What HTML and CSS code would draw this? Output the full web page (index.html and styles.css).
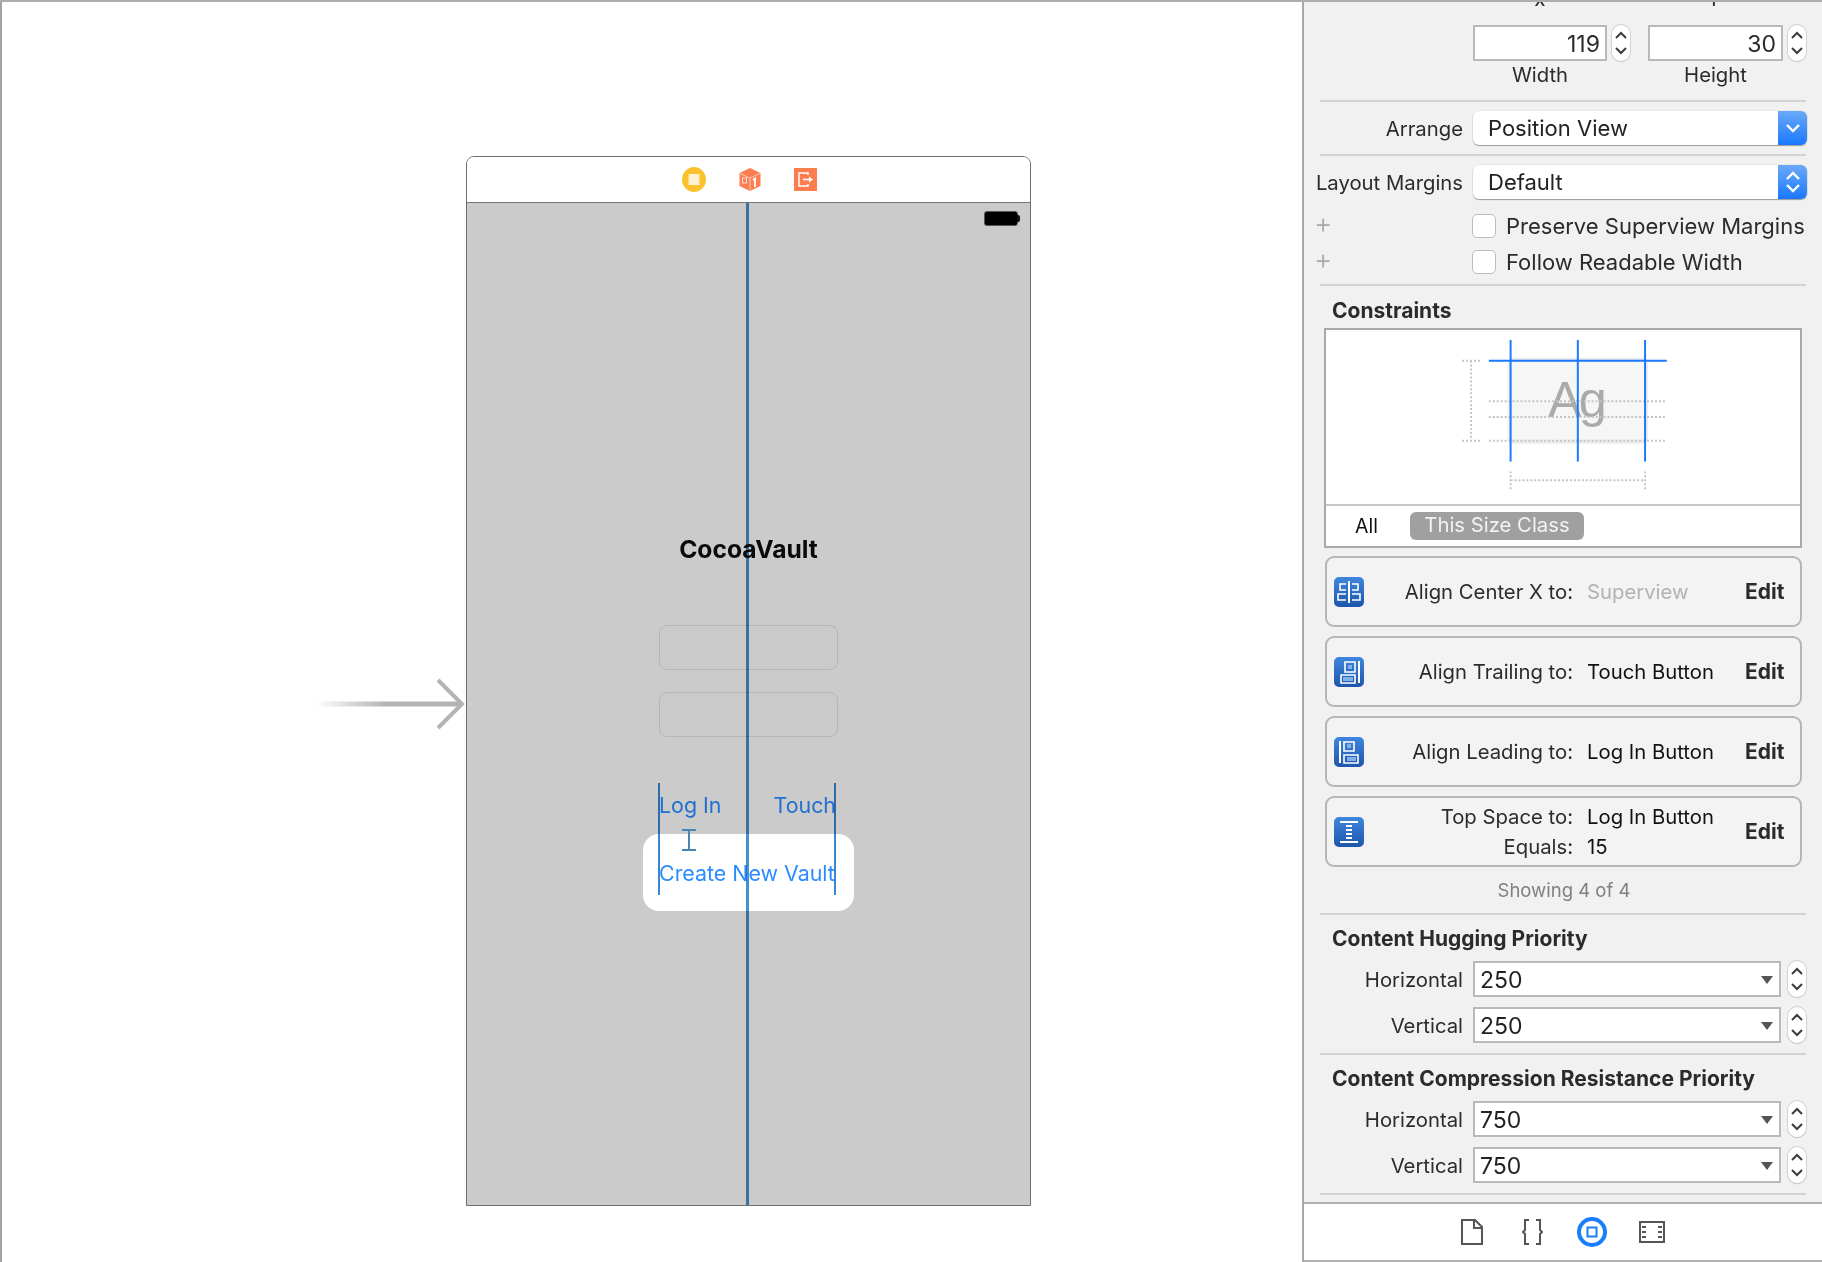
FILE: index.html
```html
<!DOCTYPE html>
<html lang="en">
<head>
    <meta charset="UTF-8">
    <title>CocoaVault - Main.storyboard</title>
    <link rel="stylesheet" href="styles.css">
</head>
<body>

<svg class="sprite" width="0" height="0">
    <symbol id="stepper-arrows" viewBox="0 0 18 36">
        <path d="M4 13 L9 8 L14 13 M4 23 L9 28 L14 23" fill="none" stroke="#3c3c3c" stroke-width="2"/>
    </symbol>
    <symbol id="combo-arrow" viewBox="0 0 12 8">
        <path d="M0 0 H12 L6 8 Z" fill="#555"/>
    </symbol>
    <linearGradient id="icon-blue" x1="0" y1="0" x2="0" y2="1">
        <stop offset="0" stop-color="#3f86de"/>
        <stop offset="1" stop-color="#1d56ab"/>
    </linearGradient>
    <linearGradient id="arrow-fade" x1="0" y1="0" x2="1" y2="0">
        <stop offset="0" stop-color="#b3b3b3" stop-opacity="0"/>
        <stop offset="0.5" stop-color="#b3b3b3"/>
        <stop offset="1" stop-color="#b3b3b3"/>
    </linearGradient>
</svg>

<div class="app">

    <!-- storyboard canvas -->
    <main class="canvas">
        <svg class="entry-arrow" width="151" height="60" viewBox="0 0 151 60">
            <rect x="0" y="27.5" width="145" height="5" fill="url(#arrow-fade)"/>
            <path d="M123 6 L147 30 L123 54" fill="none" stroke="#b3b3b3" stroke-width="4"/>
        </svg>

        <section class="scene">
            <header class="scene-dock">
                <svg width="24" height="25" viewBox="0 0 24 25">
                    <ellipse cx="12" cy="12.5" rx="12" ry="12.5" fill="#fcc22e"/>
                    <rect x="6.5" y="7" width="11" height="11" fill="#fdf3d2"/>
                    <path d="M7 8 V17 M17 8 V17" stroke="#f7d574" stroke-width="1" stroke-dasharray="1 1"/>
                </svg>
                <svg width="22" height="23" viewBox="0 0 22 23">
                    <path d="M11 0 L21.5 5 V18 L11 23 L0.5 18 V5 Z" fill="#fb7d50"/>
                    <path d="M1 5.5 L11 10 L21 5.5 M11 10 V22" fill="none" stroke="#fde0d4" stroke-width="0.8"/>
                    <rect x="3.5" y="10" width="4" height="5" fill="none" stroke="#fde0d4" stroke-width="1"/>
                    <path d="M14 12 L16 10.5 V19" fill="none" stroke="#fff" stroke-width="1.8"/>
                </svg>
                <svg width="23" height="23" viewBox="0 0 23 23">
                    <rect width="23" height="23" fill="#fb7d50"/>
                    <path d="M14 7 V5 H5 V18 H14 V16" fill="none" stroke="#fff" stroke-width="1.5"/>
                    <path d="M9 11.5 H15" stroke="#fff" stroke-width="1.5"/>
                    <path d="M15 8.5 L19 11.5 L15 14.5 Z" fill="#fff"/>
                </svg>
            </header>

            <div class="scene-view">
                <span class="battery"></span>
                <div class="app-title">CocoaVault</div>
                <div class="text-field field-user"></div>
                <div class="text-field field-pass"></div>
                <div class="selected-backdrop"></div>
                <span class="scene-button btn-login">Log In</span>
                <span class="scene-button btn-touch">Touch</span>
                <span class="scene-button btn-create">Create New Vault</span>
                <span class="guide guide-center"></span>
                <span class="guide guide-left"></span>
                <span class="guide guide-right"></span>
                <svg class="ibeam" width="14" height="22" viewBox="0 0 14 22">
                    <path d="M0 1 H14 M0 21 H14 M7 1 V21" fill="none" stroke="#4a86b4" stroke-width="2"/>
                </svg>
            </div>
        </section>
    </main>

    <!-- size inspector -->
    <aside class="inspector">
        <div class="clipped-row">
            <span class="clipped-label">X</span>
            <span class="clipped-label">Y</span>
        </div>

        <div class="form-row size-row">
            <input class="size-input" value="119">
            <span class="stepper"><svg width="18" height="36"><use href="#stepper-arrows"/></svg></span>
            <input class="size-input second" value="30">
            <span class="stepper"><svg width="18" height="36"><use href="#stepper-arrows"/></svg></span>
        </div>
        <div class="form-row size-captions">
            <span class="caption">Width</span>
            <span class="caption second">Height</span>
        </div>

        <hr class="divider first-divider">

        <div class="form-row select-row first-select">
            <label>Arrange</label>
            <div class="select">
                <span>Position View</span>
                <span class="select-btn">
                    <svg width="18" height="12" viewBox="0 0 18 12"><path d="M3 3 L9 9 L15 3" fill="none" stroke="#fff" stroke-width="2.4"/></svg>
                </span>
            </div>
        </div>

        <hr class="divider tight-divider">

        <div class="form-row select-row second-select">
            <label>Layout Margins</label>
            <div class="select">
                <span>Default</span>
                <span class="select-btn">
                    <svg width="18" height="26" viewBox="0 0 18 26"><path d="M3 10 L9 4 L15 10 M3 16 L9 22 L15 16" fill="none" stroke="#fff" stroke-width="2.4"/></svg>
                </span>
            </div>
        </div>

        <div class="check-row first-check">
            <span class="plus">+</span>
            <span class="checkbox"></span>
            <span>Preserve Superview Margins</span>
        </div>
        <div class="check-row second-check">
            <span class="plus">+</span>
            <span class="checkbox"></span>
            <span>Follow Readable Width</span>
        </div>

        <hr class="divider">

        <h2 class="section-title constraints-title">Constraints</h2>

        <div class="constraint-box">
            <svg class="constraint-diagram" width="474" height="176" viewBox="0 0 474 176">
                <rect x="183" y="30" width="138" height="83" rx="3" fill="#f6f6f6" stroke="#ededed" stroke-width="4"/>
                <text class="diagram-ag" x="250" y="88" text-anchor="middle">Ag</text>
                <g fill="none" stroke="#c4c4c4" stroke-width="2" stroke-dasharray="2 2">
                    <path d="M162 72 H342 M162 88 H342 M162 112 H342"/>
                    <path d="M135 31 H153 M135 112 H153 M144 31 V112"/>
                    <path d="M184 152 H320 M184 143 V161 M320 143 V161"/>
                </g>
                <path d="M184 10 V133 M252 10 V133 M320 10 V133 M162 31 H342" fill="none" stroke="#1a7aff" stroke-width="2"/>
            </svg>
            <div class="size-class-bar">
                <span class="size-all">All</span>
                <span class="size-pill">This Size Class</span>
            </div>
        </div>

        <div class="card first-card">
            <svg class="card-icon" width="30" height="30" viewBox="0 0 30 30">
                <rect width="30" height="30" rx="5" fill="url(#icon-blue)"/>
                <path d="M15 4 V26" stroke="#fff" stroke-width="2"/>
                <path d="M12 7 H6 V13 H12 M12 17 H4 V23 H12 M18 7 H24 V13 H18 M18 17 H26 V23 H18" fill="none" stroke="#fff" stroke-width="1.6"/>
            </svg>
            <div class="card-lines">
                <div class="card-line"><span class="card-label">Align Center X to:</span><span class="card-value muted">Superview</span></div>
            </div>
            <span class="card-edit">Edit</span>
        </div>

        <div class="card">
            <svg class="card-icon" width="30" height="30" viewBox="0 0 30 30">
                <rect width="30" height="30" rx="5" fill="url(#icon-blue)"/>
                <rect x="14" y="8" width="4" height="4" fill="#7fb0ea"/>
                <rect x="9" y="20" width="10" height="4" fill="#7fb0ea"/>
                <path d="M25 4 V26" stroke="#fff" stroke-width="2"/>
                <path d="M11 5 H21 V15 H11 Z M7 18 H21 V26 H7 Z" fill="none" stroke="#fff" stroke-width="1.6"/>
            </svg>
            <div class="card-lines">
                <div class="card-line"><span class="card-label">Align Trailing to:</span><span class="card-value">Touch Button</span></div>
            </div>
            <span class="card-edit">Edit</span>
        </div>

        <div class="card">
            <svg class="card-icon" width="30" height="30" viewBox="0 0 30 30">
                <rect width="30" height="30" rx="5" fill="url(#icon-blue)"/>
                <rect x="13" y="7" width="4" height="4" fill="#7fb0ea"/>
                <rect x="13" y="20" width="9" height="4" fill="#7fb0ea"/>
                <path d="M6 4 V26" stroke="#fff" stroke-width="2"/>
                <path d="M10 5 H20 V14 H10 Z M10 18 H24 V26 H10 Z" fill="none" stroke="#fff" stroke-width="1.6"/>
            </svg>
            <div class="card-lines">
                <div class="card-line"><span class="card-label">Align Leading to:</span><span class="card-value">Log In Button</span></div>
            </div>
            <span class="card-edit">Edit</span>
        </div>

        <div class="card">
            <svg class="card-icon" width="30" height="30" viewBox="0 0 30 30">
                <rect width="30" height="30" rx="5" fill="url(#icon-blue)"/>
                <path d="M6 5 H24 M6 25 H24" stroke="#fff" stroke-width="1.8"/>
                <path d="M12 9 H18 M12 13 H18 M12 17 H18 M12 21 H18" stroke="#fff" stroke-width="2"/>
            </svg>
            <div class="card-lines">
                <div class="card-line"><span class="card-label">Top Space to:</span><span class="card-value">Log In Button</span></div>
                <div class="card-line"><span class="card-label">Equals:</span><span class="card-value">15</span></div>
            </div>
            <span class="card-edit">Edit</span>
        </div>

        <div class="showing">Showing 4 of 4</div>

        <hr class="divider showing-divider">

        <h2 class="section-title">Content Hugging Priority</h2>

        <div class="form-row combo-row first-combo">
            <label>Horizontal</label>
            <div class="combo"><span>250</span><svg width="12" height="8"><use href="#combo-arrow"/></svg></div>
            <span class="stepper"><svg width="18" height="36"><use href="#stepper-arrows"/></svg></span>
        </div>
        <div class="form-row combo-row">
            <label>Vertical</label>
            <div class="combo"><span>250</span><svg width="12" height="8"><use href="#combo-arrow"/></svg></div>
            <span class="stepper"><svg width="18" height="36"><use href="#stepper-arrows"/></svg></span>
        </div>

        <hr class="divider">

        <h2 class="section-title">Content Compression Resistance Priority</h2>

        <div class="form-row combo-row first-combo">
            <label>Horizontal</label>
            <div class="combo"><span>750</span><svg width="12" height="8"><use href="#combo-arrow"/></svg></div>
            <span class="stepper"><svg width="18" height="36"><use href="#stepper-arrows"/></svg></span>
        </div>
        <div class="form-row combo-row">
            <label>Vertical</label>
            <div class="combo"><span>750</span><svg width="12" height="8"><use href="#combo-arrow"/></svg></div>
            <span class="stepper"><svg width="18" height="36"><use href="#stepper-arrows"/></svg></span>
        </div>

        <hr class="divider">

        <footer class="tab-bar">
            <svg class="tab-file" width="22" height="26" viewBox="0 0 22 26">
                <path d="M1 1 H14 L21 8 V25 H1 Z" fill="none" stroke="#555" stroke-width="2"/>
                <path d="M13 1 V9 H21" fill="none" stroke="#555" stroke-width="2"/>
            </svg>
            <svg class="tab-braces" width="21" height="26" viewBox="0 0 21 26">
                <path d="M7 1 H3 V11 L1 13 L3 15 V25 H7 M14 1 H18 V11 L20 13 L18 15 V25 H14" fill="none" stroke="#555" stroke-width="2"/>
            </svg>
            <svg class="tab-size" width="30" height="30" viewBox="0 0 30 30">
                <circle cx="15" cy="15" r="13" fill="none" stroke="#1a7dfa" stroke-width="4"/>
                <rect x="10.5" y="10.5" width="9" height="9" fill="none" stroke="#1a7dfa" stroke-width="2"/>
            </svg>
            <svg class="tab-film" width="26" height="22" viewBox="0 0 26 22">
                <rect x="1" y="1" width="24" height="20" fill="none" stroke="#555" stroke-width="2"/>
                <path d="M3 6 H7 M3 11 H7 M3 16 H7 M19 6 H23 M19 11 H23 M19 16 H23" stroke="#555" stroke-width="2"/>
            </svg>
        </footer>
    </aside>
</div>

</body>
</html>
```

FILE: styles.css
```css
* {
    box-sizing: border-box;
}

body {
    margin: 0;
    font-family: "Inter", "Noto Sans", sans-serif;
    font-size: 20.3px;
    color: #2b2b2b;
    background: #fff;
}

.sprite {
    position: absolute;
}

.app {
    display: flex;
    width: 1822px;
    height: 1262px;
    overflow: hidden;
    border-top: 2px solid #adadad;
}

/* canvas */
.canvas {
    position: relative;
    width: 1302px;
    border-left: 2px solid #a3a3a3;
    background: #fff;
}

.entry-arrow {
    position: absolute;
    left: 313px;
    top: 672px;
}

.scene {
    position: absolute;
    left: 464px;
    top: 154px;
    width: 565px;
    height: 1050px;
    display: flex;
    flex-direction: column;
    border: 1px solid #6f6f6f;
    border-radius: 8px 8px 0 0;
    overflow: hidden;
}

.scene-dock {
    height: 46px;
    flex-shrink: 0;
    display: flex;
    align-items: center;
    justify-content: center;
    gap: 33px;
    padding-left: 2px;
    background: #fff;
    border-bottom: 1px solid #777;
}

.scene-view {
    position: relative;
    flex: 1;
    background: #cbcbcb;
}

.battery {
    position: absolute;
    left: 517px;
    top: 8px;
    width: 34px;
    height: 15px;
    background: #000;
    border: 1px solid #555;
    border-radius: 3px;
}

.battery::after {
    content: "";
    position: absolute;
    left: 32px;
    top: 3px;
    width: 3px;
    height: 7px;
    background: #111;
    border-radius: 0 2px 2px 0;
}

.app-title {
    position: absolute;
    left: 0;
    right: 0;
    top: 330px;
    text-align: center;
    font-size: 24.6px;
    line-height: 32px;
    font-weight: 700;
    color: #0a0a0a;
}

.text-field {
    position: absolute;
    left: 192px;
    width: 179px;
    height: 45px;
    border: 1.5px solid #b6b6b6;
    border-radius: 8px;
}

.field-user {
    top: 422px;
}

.field-pass {
    top: 489px;
}

.selected-backdrop {
    position: absolute;
    left: 176px;
    top: 631px;
    width: 211px;
    height: 77px;
    background: #fff;
    border-radius: 16px;
}

.scene-button {
    position: absolute;
    font-size: 21.4px;
    line-height: 30px;
    white-space: nowrap;
    color: #2270cf;
}

.btn-login {
    left: 192px;
    top: 587px;
}

.btn-touch {
    right: 194px;
    top: 587px;
}

.btn-create {
    left: 192px;
    top: 655px;
    color: #2b8cff;
}

.guide {
    position: absolute;
    width: 2px;
    background: #3a86d4;
    mix-blend-mode: multiply;
}

.guide-center {
    left: 279px;
    top: 0;
    bottom: 0;
    width: 3px;
    background: #4690d0;
}

.guide-left {
    left: 191px;
    top: 580px;
    height: 112px;
}

.guide-right {
    left: 367px;
    top: 580px;
    height: 112px;
}

.ibeam {
    position: absolute;
    left: 215px;
    top: 626px;
}

/* inspector */
.inspector {
    width: 520px;
    height: 1260px;
    display: flex;
    flex-direction: column;
    border-left: 2px solid #a8a8a8;
    background: #f1f1f1;
}

.clipped-row {
    position: relative;
    height: 4px;
    overflow: hidden;
}

.clipped-label {
    position: absolute;
    bottom: -5px;
    width: 20px;
    text-align: center;
    line-height: 20px;
}

.clipped-label:first-child {
    left: 226px;
}

.clipped-label:last-child {
    left: 400px;
}

.form-row {
    display: flex;
    align-items: center;
}

.form-row label {
    width: 159px;
    margin-right: 10px;
    text-align: right;
    white-space: nowrap;
}

.size-row {
    margin-top: 19px;
    padding-left: 169px;
}

.size-input {
    width: 134px;
    height: 36px;
    padding: 2px 5px 0 0;
    border: 2px solid #b9b9b9;
    background: #fff;
    font: inherit;
    font-size: 23px;
    color: #2b2b2b;
    text-align: right;
}

.size-input.second {
    width: 135px;
    margin-left: 18px;
}

.stepper {
    width: 18px;
    height: 36px;
    margin-left: 5px;
    flex-shrink: 0;
    background: #fff;
    border-radius: 9px;
    box-shadow: 0 0 0 1px #d2d2d2, 0 1px 1px #aaa;
}

.stepper svg {
    display: block;
}

.size-captions {
    margin-top: 3px;
    height: 20px;
    padding-left: 169px;
}

.caption {
    width: 134px;
    text-align: center;
}

.caption.second {
    width: 135px;
    margin-left: 41px;
}

.divider {
    width: 486px;
    height: 2px;
    margin: 10px 0 0 16px;
    border: none;
    background: #d3d3d3;
    flex-shrink: 0;
}

.first-divider {
    margin-top: 16px;
}

.tight-divider {
    margin-top: 9px;
}

.showing-divider {
    margin-top: 13px;
}

.select-row {
    height: 34px;
}

.first-select {
    margin-top: 9px;
}

.second-select {
    margin-top: 9px;
}

.select {
    width: 334px;
    height: 34px;
    display: flex;
    align-items: center;
    justify-content: space-between;
    padding-left: 15px;
    font-size: 22px;
    color: #222;
    background: #fff;
    border-radius: 6px;
    box-shadow: 0 1px 1px #999, 0 0 0 0.5px #ddd;
    overflow: hidden;
}

.select-btn {
    width: 29px;
    height: 34px;
    display: flex;
    align-items: center;
    justify-content: center;
    background: linear-gradient(#6aa9f8, #1a78ff);
}

.check-row {
    height: 24px;
    display: flex;
    align-items: center;
    padding-left: 10px;
    font-size: 22px;
    white-space: nowrap;
}

.first-check {
    margin-top: 15px;
}

.second-check {
    margin-top: 12px;
}

.plus {
    width: 158px;
    margin-top: -6px;
    font-size: 28px;
    font-weight: 300;
    color: #a8a8a8;
}

.checkbox {
    width: 24px;
    height: 24px;
    margin-right: 10px;
    background: #fff;
    border: 1px solid #bcbcbc;
    border-radius: 5px;
}

.section-title {
    height: 22px;
    margin: 13px 0 0 28px;
    font-size: 21px;
    line-height: 22px;
    font-weight: 700;
    color: #2b2b2b;
}

.constraints-title {
    margin-top: 14px;
}

.constraint-box {
    width: 478px;
    height: 220px;
    margin: 6px 0 0 20px;
    flex-shrink: 0;
    border: 2px solid #a9a9a9;
    background: #fff;
}

.constraint-diagram {
    display: block;
    border-bottom: 2px solid #c6c6c6;
}

.diagram-ag {
    font-family: "Liberation Sans", sans-serif;
    font-size: 51px;
    letter-spacing: -3px;
    fill: #aaa;
}

.size-class-bar {
    height: 40px;
    display: flex;
    align-items: center;
    padding: 0 0 1px 29px;
}

.size-all {
    width: 55px;
    font-size: 19.5px;
    color: #111;
}

.size-pill {
    width: 174px;
    height: 28px;
    display: flex;
    align-items: center;
    justify-content: center;
    padding-bottom: 2px;
    font-size: 20.3px;
    color: #f2f2f2;
    background: #a0a0a0;
    border-radius: 6px;
}

.card {
    width: 477px;
    height: 71px;
    margin: 9px 0 0 21px;
    flex-shrink: 0;
    display: flex;
    align-items: center;
    padding-left: 7px;
    border: 2px solid #b6b6b6;
    border-radius: 9px;
    background: #f3f3f3;
}

.first-card {
    margin-top: 8px;
}

.card-lines {
    width: 381px;
}

.card-line {
    display: grid;
    grid-template-columns: 209px 159px;
    column-gap: 14px;
    line-height: 30px;
    white-space: nowrap;
}

.card-label {
    text-align: right;
}

.card-value {
    color: #111;
}

.card-value.muted {
    color: #b2b2b2;
}

.card-edit {
    font-size: 21px;
    font-weight: 700;
}

.showing {
    height: 20px;
    margin-top: 13px;
    text-align: center;
    padding-left: 2px;
    line-height: 20px;
    font-size: 18.5px;
    color: #808080;
}

.combo-row {
    margin-top: 10px;
}

.first-combo {
    margin-top: 11px;
}

.combo-row .stepper {
    margin-left: 7px;
}

.combo {
    width: 308px;
    height: 36px;
    display: flex;
    align-items: center;
    justify-content: space-between;
    padding: 2px 6px 0 5px;
    font-size: 23px;
    color: #222;
    background: #fff;
    border: 2px solid #b9b9b9;
}

.tab-bar {
    margin-top: auto;
    height: 60px;
    flex-shrink: 0;
    display: flex;
    align-items: center;
    padding-left: 157px;
    background: #fff;
    border-top: 2px solid #b0b0b0;
    border-bottom: 2px solid #b0b0b0;
}

.tab-braces {
    margin-left: 39px;
}

.tab-size {
    margin-left: 34px;
}

.tab-film {
    margin-left: 32px;
}
```
